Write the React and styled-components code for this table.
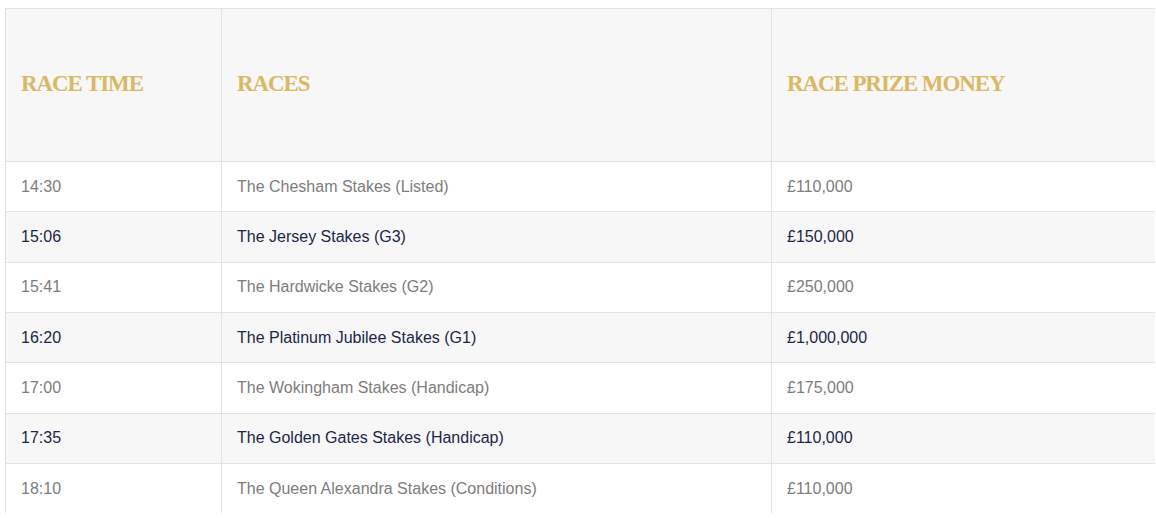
import React from "react";
import styled, { createGlobalStyle } from "styled-components";

const Global = createGlobalStyle`
  html, body { margin: 0; padding: 0; background: #ffffff; overflow: hidden; }
  body { font-family: "Liberation Sans", Arial, sans-serif; }
`;

const Page = styled.div`
  padding: 8px 0 0 5px;
  height: 505px;
  overflow: hidden;
`;

const Table = styled.table`
  width: 1149px;
  border-collapse: collapse;
  table-layout: fixed;
  border-top: 1px solid #e2e2e2;
  border-left: 1px solid #e2e2e2;
`;

const Col = styled.col`
  width: ${(p) => p.$w}px;
`;

const Head = styled.th`
  height: 149px;
  background: #f7f7f7;
  text-align: left;
  vertical-align: middle;
  padding: 0 15px 3px;
  font-family: "Liberation Serif", "DejaVu Serif", serif;
  font-weight: 700;
  font-size: 23px;
  letter-spacing: -1.1px;
  color: #dbb864;
  border-bottom: 1px solid #e2e2e2;
  border-left: 1px solid #e2e2e2;
  &:first-child { border-left: none; }
`;

const Row = styled.tr`
  background: ${(p) => (p.$alt ? "#f7f7f7" : "#ffffff")};
  color: ${(p) => (p.$alt ? "#1b2747" : "#7d7d7d")};
`;

const Cell = styled.td`
  height: 49.33px;
  padding: 0 15px;
  font-size: 16px;
  vertical-align: middle;
  border-bottom: 1px solid #e2e2e2;
  border-left: 1px solid #e2e2e2;
  &:first-child { border-left: none; }
`;

const races = [
  ["14:30", "The Chesham Stakes (Listed)", "£110,000"],
  ["15:06", "The Jersey Stakes (G3)", "£150,000"],
  ["15:41", "The Hardwicke Stakes (G2)", "£250,000"],
  ["16:20", "The Platinum Jubilee Stakes (G1)", "£1,000,000"],
  ["17:00", "The Wokingham Stakes (Handicap)", "£175,000"],
  ["17:35", "The Golden Gates Stakes (Handicap)", "£110,000"],
  ["18:10", "The Queen Alexandra Stakes (Conditions)", "£110,000"],
];

export default function App() {
  return (
    <>
      <Global />
      <Page>
        <Table>
          <colgroup>
            <Col $w={216} />
            <Col $w={550} />
            <Col $w={383} />
          </colgroup>
          <thead>
            <tr>
              <Head>RACE TIME</Head>
              <Head>RACES</Head>
              <Head>RACE PRIZE MONEY</Head>
            </tr>
          </thead>
          <tbody>
            {races.map((r, i) => (
              <Row key={r[0]} $alt={i % 2 === 1}>
                <Cell>{r[0]}</Cell>
                <Cell>{r[1]}</Cell>
                <Cell>{r[2]}</Cell>
              </Row>
            ))}
          </tbody>
        </Table>
      </Page>
    </>
  );
}
